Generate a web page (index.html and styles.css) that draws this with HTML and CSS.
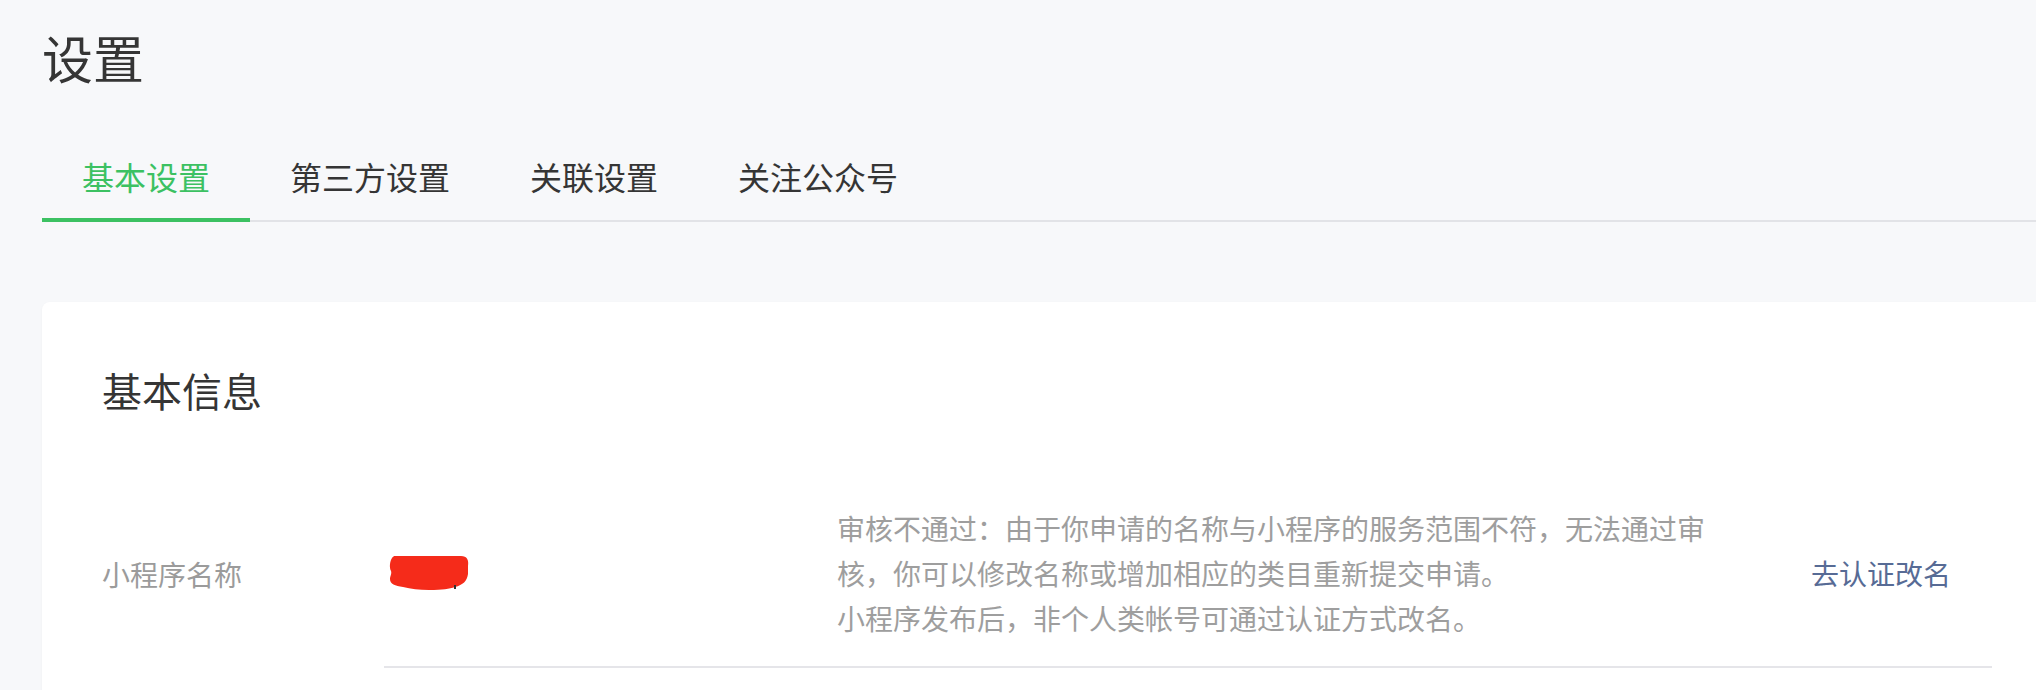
FILE: index.html
```html
<!DOCTYPE html>
<html lang="zh-CN">
<head>
<meta charset="utf-8">
<title>设置</title>
<link rel="stylesheet" href="styles.css">
</head>
<body>
<div class="page">
  <h1 class="page-title">设置</h1>
  <nav class="tabs">
    <a class="tab tab-active">基本设置</a>
    <a class="tab">第三方设置</a>
    <a class="tab">关联设置</a>
    <a class="tab">关注公众号</a>
  </nav>
  <section class="card">
    <h2 class="card-title">基本信息</h2>
    <div class="row">
      <div class="row-label">小程序名称</div>
      <div class="row-body">
        <div class="row-value">
          <svg class="redact" width="80" height="36" viewBox="0 0 80 36">
            <path d="M6 1 L72 1 C78 1 80 5 79 11 L79 19 C78 26 74 30 66 32 C60 34 54 35 40 35 C30 35 22 34 14 32 C6 31 1 29 1 24 C1 21 3 19 2 16 C0 12 1 6 3 3 C4 1.5 5 1 6 1 Z" fill="#f52b1a"/>
            <rect x="65" y="30" width="2" height="4" fill="#333"/>
          </svg>
        </div>
        <div class="row-desc">
          <p class="desc-line"><span class="desc-full">审核不通过：由于你申请的名称与小程序的服务范围不符，无法通过审</span>核，你可以修改名称或增加相应的类目重新提交申请。</p>
          <p class="desc-line">小程序发布后，非个人类帐号可通过认证方式改名。</p>
        </div>
        <a class="row-link">去认证改名</a>
      </div>
    </div>
  </section>
</div>
</body>
</html>
```
FILE: styles.css
```css
html, body {
  margin: 0;
  padding: 0;
  background: #f7f8fa;
  overflow: hidden;
}

body {
  font-family: "Noto Sans CJK SC", "Noto Sans", sans-serif;
  color: #353535;
}

.page {
  padding: 22px 0 0 42px;
}

.page-title {
  margin: 0;
  font-size: 51px;
  line-height: 70px;
  font-weight: 400;
  color: #353535;
}

.tabs {
  display: flex;
  margin-top: 62px;
  border-bottom: 2px solid #e2e3e7;
}

.tab {
  display: block;
  padding: 0 40px 20px;
  font-size: 32px;
  line-height: 44px;
  color: #353535;
  border-bottom: 4px solid transparent;
  margin-bottom: -2px;
  cursor: pointer;
}

.tab-active {
  color: #3cc162;
  border-bottom-color: #3cc162;
}

.card {
  margin-top: 80px;
  width: 2010px;
  box-sizing: border-box;
  background: #ffffff;
  border-radius: 8px;
  box-shadow: 0 1px 3px rgba(0, 0, 0, 0.04);
  padding: 60px 60px 80px;
}

.card-title {
  margin: 0;
  font-size: 40px;
  line-height: 56px;
  font-weight: 400;
  color: #353535;
}

.row {
  display: flex;
  margin-top: 62px;
}

.row-label {
  width: 282px;
  flex: none;
  align-self: center;
  font-size: 28px;
  line-height: 44.8px;
  color: #9b9b9b;
}

.row-body {
  flex: 1;
  display: flex;
  align-items: center;
  padding: 26px 41px 26px 0;
  border-bottom: 2px solid #e5e5e9;
}

.row-value {
  width: 453px;
  flex: none;
  display: flex;
  align-items: center;
  padding-left: 5px;
  box-sizing: border-box;
}

.redact {
  display: block;
}

.row-desc {
  width: 866px;
  flex: none;
  font-size: 28px;
  line-height: 44.8px;
  color: #9e9e9e;
}

.desc-line {
  margin: 0;
}

.desc-full {
  display: block;
  white-space: nowrap;
  text-align: justify;
  text-align-last: justify;
}

.row-link {
  margin-left: auto;
  font-size: 28px;
  line-height: 44.8px;
  color: #576b95;
  cursor: pointer;
}
```
